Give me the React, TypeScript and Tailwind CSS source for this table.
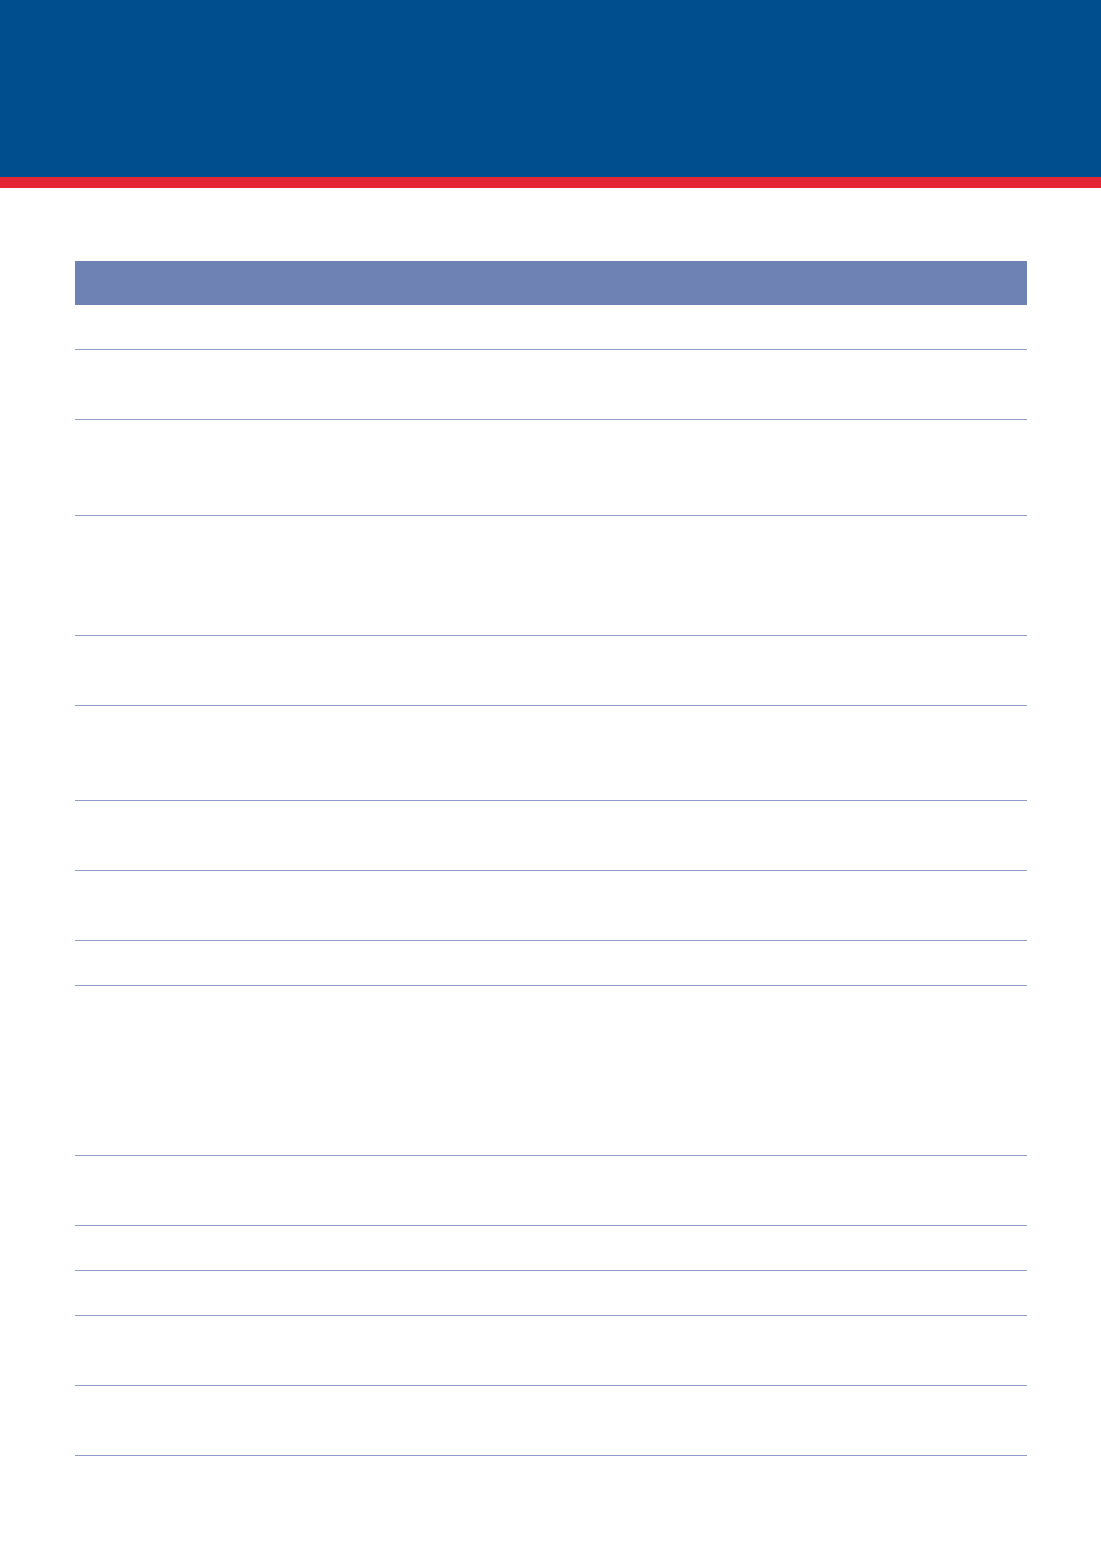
const rows = [45, 70, 96, 120, 70, 95, 70, 70, 45, 170, 70, 45, 45, 70, 70];

export default function App() {
  return (
    <div className="min-h-[1562px] bg-white font-['Liberation_Sans',sans-serif]">
      {/* Banner */}
      <div className="h-[177px] bg-[#004e8d]" />
      <div className="h-[11px] bg-[#e32536]" />

      {/* Table */}
      <div className="px-[75px] pt-[73px] pr-[74px]">
        <div className="h-[44px] bg-[#6e82b3]" />
        {rows.map((h, i) => (
          <div
            key={i}
            className="border-b border-[#8f9cc7]"
            style={{ height: h }}
          />
        ))}
      </div>
    </div>
  );
}
